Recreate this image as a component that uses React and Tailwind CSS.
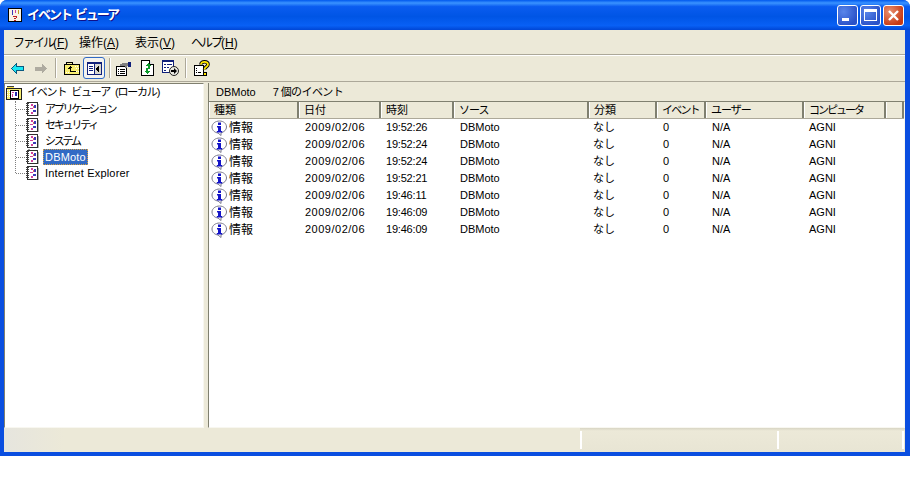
import React from "react";

const rows = [
  ["2009/02/06", "19:52:26"],
  ["2009/02/06", "19:52:24"],
  ["2009/02/06", "19:52:24"],
  ["2009/02/06", "19:52:21"],
  ["2009/02/06", "19:46:11"],
  ["2009/02/06", "19:46:09"],
  ["2009/02/06", "19:46:09"],
];

const columns = [
  ["種類", ""],
  ["日付", ""],
  ["時刻", ""],
  ["ソース", "tracking-[-1px]"],
  ["分類", ""],
  ["イベント", "tracking-[-1.800px]"],
  ["ユーザー", "tracking-[-1px]"],
  ["コンピュータ", "tracking-[-2px]"],
  ["", ""],
];
const grid = "grid grid-cols-[90px_82px_73px_135px_68px_49px_98px_82px_1fr]";

const LogIcon = ({ open }) => (
  <svg width="14" height="16" viewBox="0 0 14 16" shapeRendering="crispEdges" className="shrink-0">
    {open && <path d="M3 0h2v15H3z" fill="#a0a0a0" />}
    <path d="M2.500 1.500h10v13h-10z" fill="#fff" stroke="#303030" />
    <path d="M13 3h1v12h-1z" fill="#b0b0b0" />
    <path d="M1 2h3v1H1zM1 4h3v1H1zM1 6h3v1H1zM1 8h3v1H1zM1 10h3v1H1zM1 12h3v1H1z" fill="#404040" />
    <path d="M6 3h2v2H6zM5 7h3v1H5zM6 11h2v2H6z" fill="#d0409c" />
    <path d="M9 4h2v3H9zM8 9h3v2H8z" fill="#3a3ab8" />
    <path d="M8 5h1v2H8z" fill="#e06060" />
  </svg>
);

const RootIcon = () => (
  <svg width="16" height="16" viewBox="0 0 16 16" shapeRendering="crispEdges" className="shrink-0">
    <path d="M1 1h7v2H1z" fill="#f6e040" />
    <path d="M1 1h7v1H1z" fill="#404040" />
    <path d="M.5 3.500h15v11H.5z" fill="#f8ee70" stroke="#202020" />
    <path d="M1 5h1v1H1zM3 5h1v1H3zM1 7h1v1H1zM3 7h1v1H3zM1 9h1v1H1zM3 9h1v1H3zM1 11h1v1H1zM3 11h1v1H3z" fill="#fff" />
    <path d="M4.500 5.500h8v8h-8z" fill="#fff" stroke="#000" />
    <path d="M6 7h2v1H6zM6 9h1v3H6z" fill="#d0409c" />
    <path d="M9 7h2v4H9z" fill="#2a2ab0" />
  </svg>
);

const InfoIcon = () => (
  <svg width="17" height="16" viewBox="0 0 17 16" className="shrink-0">
    <path d="M8.500 1C4.400 1 1 3.600 1 7s3 5.700 6 6l3 2.500v-2.700c3-.7 5.500-2.900 5.500-5.800C15.500 3.600 12.600 1 8.500 1z" fill="#fff" stroke="#7a7a8c" />
    <path d="M7 2.500h3v2.500H7zM6 6h4v5h1.200v1.500H5.800V11H7V7.500H6z" fill="#1414c8" />
  </svg>
);

const BackArrow = () => (
  <svg width="13" height="11" viewBox="0 0 13 11" shapeRendering="crispEdges">
    <path d="M.5 5.500l5-5v3h7v4h-7v3z" fill="#19e8f4" stroke="#0a5a80" />
  </svg>
);

const ForwardArrow = () => (
  <svg width="13" height="11" viewBox="0 0 13 11" shapeRendering="crispEdges">
    <path d="M12.500 5.500l-5-5v3h-7v4h7v3z" fill="#aeaba0" />
  </svg>
);

const FolderUp = () => (
  <svg width="16" height="15" viewBox="0 0 16 15" shapeRendering="crispEdges">
    <path d="M2.500 3.500v-2h6v2" fill="#f8f0a0" stroke="#000" />
    <path d="M.5 3.500h15v10H.5z" fill="#f8ee70" stroke="#000" />
    <path d="M11 5h1v1h-1zM13 5h1v1h-1zM12 7h1v1h-1zM14 7h1v1h-1zM12 10h1v1h-1zM14 10h1v1h-1zM2 11h1v1H2zM4 11h1v1H4z" fill="#fff" />
    <path d="M6 5h1v1H6zM5 6h3v1H5zM4 7h2v1H4zM6 7h1v3h5v1H6z" fill="#000" />
  </svg>
);

const PaneIcon = () => (
  <svg width="15" height="13" viewBox="0 0 15 13" shapeRendering="crispEdges">
    <path d="M0 0h15v13H0z" fill="#10207a" />
    <path d="M1 2h6v10H1z" fill="#fff" />
    <path d="M8 2h6v10H8z" fill="#d8d8d0" />
    <path d="M2 4h4v1H2zM2 6h4v1H2zM2 8h4v1H2z" fill="#10207a" />
    <path d="M12 4v6h-1V9h-1V8H9V6h1V5h1V4z" fill="#000" />
  </svg>
);

const PropsIcon = () => (
  <svg width="16" height="15" viewBox="0 0 16 15" shapeRendering="crispEdges">
    <path d="M.5 5.500h10v9H.5z" fill="#fff" stroke="#000" />
    <path d="M2 8h1v1H2zM4 8h5v1H4zM2 10h1v1H2zM4 10h5v1H4zM2 12h1v1H2zM4 12h5v1H4z" fill="#000" />
    <path d="M4 3h2V2h6v3h-1v2H9V5H4z" fill="#808080" />
    <path d="M12 1h3v5h-3z" fill="#10207a" />
  </svg>
);

const RefreshIcon = () => (
  <svg width="13" height="16" viewBox="0 0 13 16" shapeRendering="crispEdges">
    <path d="M.5.500h8l4 4v11H.5z" fill="#fff" stroke="#000" />
    <path d="M8.500.500v4h4" fill="#ddd" stroke="#000" />
    <path d="M7 3h1v1h1v1h1v1H9v3H7V6H5V5h1V4h1zM5 8h2v3h2v1H8v1H7v1H6v-1H5v-1H4v-1h1z" fill="#0a9a2a" />
  </svg>
);

const ExportIcon = () => (
  <svg width="17" height="16" viewBox="0 0 17 16">
    <path d="M.5.500h11v12H.5z" fill="#fff" stroke="#10207a" shapeRendering="crispEdges" />
    <path d="M0 0h12v2H0z" fill="#10207a" shapeRendering="crispEdges" />
    <path d="M2 4h2v1H2zM5 4h5v1H5zM2 7h2v1H2zM5 7h2v1H5zM2 10h2v1H2z" fill="#10207a" shapeRendering="crispEdges" />
    <circle cx="12" cy="11" r="4.500" fill="#e8e8e0" stroke="#222" />
    <path d="M9 10h3V8l3 3-3 3v-2H9z" fill="#000" />
  </svg>
);

const HelpIcon = () => (
  <svg width="16" height="16" viewBox="0 0 16 16">
    <path d="M.5 5.500h9v10h-9z" fill="#fff" stroke="#000" shapeRendering="crispEdges" />
    <path d="M2 8h1v1H2zM2 10h1v1H2zM2 12h1v1H2zM4 12h3v1H4z" fill="#000" shapeRendering="crispEdges" />
    <path d="M7 4.500C7 2.800 8.500 1.800 10.500 1.800S14 2.800 14 4.500c0 2.200-3.500 2.300-3.500 5" fill="none" stroke="#000" strokeWidth="3.600" />
    <path d="M7 4.500C7 2.800 8.500 1.800 10.500 1.800S14 2.800 14 4.500c0 2.200-3.500 2.300-3.500 5" fill="none" stroke="#ffe600" strokeWidth="1.800" />
    <path d="M8.500 12h4v4h-4z" fill="#000" shapeRendering="crispEdges" />
    <path d="M9.500 13h2v2h-2z" fill="#ffe600" shapeRendering="crispEdges" />
  </svg>
);

const Separator = () => <div className="h-[20px] w-[2px] shrink-0 border-l border-r border-l-[#aca899] border-r-white" />;

const Menu = ({ label, hot, className, narrow }) => (
  <span className={className}>
    <span className={narrow}>{label}</span>(<span className="underline">{hot}</span>)
  </span>
);

const TreeItem = ({ label, open, narrow }) => (
  <div className="flex h-[16px] items-center">
    <div className="w-[9px] border-t border-dotted border-[#808080]" />
    <LogIcon open={open} />
    <span
      className={
        (open
          ? "ml-[4px] border border-dotted border-[#d8a040] bg-[#316ac5] px-[1px] leading-[14px] text-white "
          : "ml-[5px] px-[1px] leading-[14px] ") + (narrow ? "tracking-[-2.200px]" : "tracking-[0.2px]")
      }
    >
      {label}
    </span>
  </div>
);

export default function App() {
  return (
    <div className="h-[499px] w-[910px] overflow-hidden bg-white font-['Liberation_Sans','Noto_Sans_CJK_JP',sans-serif] text-[11px] text-black">
      <div className="flex h-[456px] flex-col overflow-hidden rounded-t-[7px] bg-[#0a4ee0]">
        {/* title bar */}
        <div className="flex h-[30px] shrink-0 items-center bg-[linear-gradient(to_bottom,#0058ee_0%,#3a93ff_10%,#0a5cf0_22%,#0055e5_55%,#0860f5_85%,#0046d5_100%)] pl-[7px] pr-[6px]">
          <svg width="16" height="16" viewBox="0 0 16 16" shapeRendering="crispEdges" className="shrink-0">
            <path d="M1.500 1.500h13v13h-13z" fill="#f8f4e8" stroke="#000" />
            <path d="M5 3h1v5H5z" fill="#3a3ab8" />
            <path d="M8 3h1v3H8z" fill="#d0409c" />
            <path d="M11 3h1v4h-1z" fill="#c0a020" />
            <path d="M6 9h4v1H6zM9 10h1v1H9zM7 11h2v1H7zM7 13h2v1H7z" fill="#c02020" />
          </svg>
          <span className="ml-[4px] text-[13px] font-bold text-white [text-shadow:1px_1px_#0f1089]">
            <span className="tracking-[-2px]">イベント</span> <span className="tracking-[-2px]">ビューア</span>
          </span>
          <div className="ml-auto flex gap-[2px]">
            <div className="flex h-[21px] w-[21px] items-end rounded-[3px] border border-white bg-[radial-gradient(circle_at_30%_30%,#5a86ea,#2a52c8_75%)] pb-[4px] pl-[4px]">
              <div className="h-[3px] w-[7px] bg-white" />
            </div>
            <div className="flex h-[21px] w-[21px] items-center justify-center rounded-[3px] border border-white bg-[radial-gradient(circle_at_30%_30%,#5a86ea,#2a52c8_75%)]">
              <div className="h-[12px] w-[13px] border border-t-[3px] border-white" />
            </div>
            <div className="flex h-[21px] w-[21px] items-center justify-center rounded-[3px] border border-white bg-[radial-gradient(circle_at_30%_30%,#e89070,#c83a14_75%)]">
              <svg width="13" height="13" viewBox="0 0 13 13">
                <path d="M2 2l9 9M11 2l-9 9" stroke="#fff" strokeWidth="2.400" />
              </svg>
            </div>
          </div>
        </div>

        {/* window body */}
        <div className="mb-[4px] ml-[4px] mr-[5px] flex min-h-0 flex-1 flex-col bg-[#ece9d8]">
          <div className="flex h-[25px] shrink-0 items-center border-b border-[#aca899] pl-[9px] pt-[2px] text-[12px]">
            <Menu label="ファイル" hot="F" className="w-[66px]" narrow="tracking-[-2px]" />
            <Menu label="操作" hot="A" className="w-[56px]" />
            <Menu label="表示" hot="V" className="w-[56px]" />
            <Menu label="ヘルプ" hot="H" narrow="tracking-[-2px]" />
          </div>
          <div className="flex h-[26px] shrink-0 items-center border-t border-white pb-[1px] pl-[7px]">
            <BackArrow />
            <div className="ml-[10px]">
              <ForwardArrow />
            </div>
            <div className="ml-[8px]">
              <Separator />
            </div>
            <div className="ml-[7px]">
              <FolderUp />
            </div>
            <div className="ml-[3px] flex h-[22px] w-[22px] items-center justify-center rounded-[3px] border border-[#316ac5] bg-[#f4f3ee]">
              <PaneIcon />
            </div>
            <div className="ml-[4px]">
              <Separator />
            </div>
            <div className="ml-[5px]">
              <PropsIcon />
            </div>
            <div className="ml-[9px]">
              <RefreshIcon />
            </div>
            <div className="ml-[8px]">
              <ExportIcon />
            </div>
            <div className="ml-[6px]">
              <Separator />
            </div>
            <div className="ml-[7px]">
              <HelpIcon />
            </div>
          </div>

          <div className="flex min-h-0 flex-1 border-t border-[#aca899] pt-[1px]">
            {/* tree pane */}
            <div className="w-[200px] shrink-0 border border-b-[#f8f7f0] border-l-[#808070] border-r-[#f8f7f0] border-t-[#808070] bg-white pl-[1px]">
              <div className="flex h-[17px] items-center">
                <RootIcon />
                <span className="ml-[5px] tracking-[-1.200px]">
                  イベント<span className="ml-[5px]">ビューア</span>
                  <span className="ml-[5px]">(ローカル)</span>
                </span>
              </div>
              <div className="ml-[9px] h-[72px] border-l border-dotted border-[#808080]">
                <TreeItem label="アプリケーション" narrow />
                <TreeItem label="セキュリティ" narrow />
                <TreeItem label="システム" narrow />
                <TreeItem label="DBMoto" open />
                <TreeItem label="Internet Explorer" />
              </div>
            </div>

            {/* list pane */}
            <div className="ml-[4px] flex min-w-0 flex-1 flex-col">
              <div className="flex h-[18px] shrink-0 items-center border-l border-[#808070] bg-[#ece9d8] pl-[7px]">
                <span>DBMoto</span>
                <span className="ml-[17px] tracking-[-0.600px]">7 個のイベント</span>
              </div>
              <div className="flex-1 border border-b-[#f8f7f0] border-l-[#808070] border-r-[#f8f7f0] border-t-[#808070] bg-white">
                <div className={grid + " h-[17px] border-b border-[#aca899] bg-[#ece9d8]"}>
                  {columns.map(([label, narrow], i) => (
                    <div key={i} className="overflow-hidden whitespace-nowrap border-l border-r-2 border-l-white border-r-[#808070] pl-[4px] leading-[16px]">
                      <span className={narrow}>{label}</span>
                    </div>
                  ))}
                </div>
                {rows.map(([date, time], i) => (
                  <div key={i} className={grid + " h-[17px] items-center"}>
                    <div className="flex items-center pl-[2px]">
                      <InfoIcon />
                      <span className="ml-[1px] text-[12px]">情報</span>
                    </div>
                    <div className="pb-[1px] pl-[6px] tracking-[0.5px]">{date}</div>
                    <div className="pb-[1px] pl-[5px] tracking-[-0.2px]">{time}</div>
                    <div className="pb-[1px] pl-[6px]">DBMoto</div>
                    <div className="pb-[1px] pl-[4px]">なし</div>
                    <div className="pb-[1px] pl-[6px]">0</div>
                    <div className="pb-[1px] pl-[6px]">N/A</div>
                    <div className="pb-[1px] pl-[5px]">AGNI</div>
                  </div>
                ))}
              </div>
            </div>
          </div>

          {/* status bar */}
          <div className="flex h-[24px] shrink-0 bg-[linear-gradient(to_bottom,#d8d5c4_0%,#ece9d8_12%,#e8e5d4_100%)]">
            <div className="w-[576px] bg-[linear-gradient(to_right,#e6e5de_0%,#ece9d8_60px)]" />
            <div className="my-[3px] w-[197px] border-l-2 border-white" />
            <div className="my-[3px] flex-1 border-l-2 border-white" />
            <div className="my-[3px] w-[3px] border-l-2 border-white" />
          </div>
        </div>
      </div>
    </div>
  );
}
